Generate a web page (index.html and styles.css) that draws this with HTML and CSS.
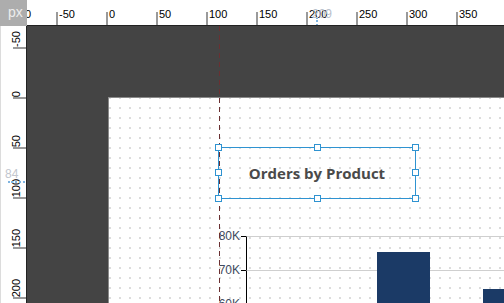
FILE: index.html
```html
<!DOCTYPE html>
<html lang="en">
<head>
  <meta charset="UTF-8">
  <title>Report Designer</title>
  <link rel="stylesheet" href="styles.css">
</head>
<body>

<div class="designer">
  <div class="corner">px</div>

  <div class="ruler-top">
    <div class="htick" style="left:-21px"><span>-100</span></div>
    <div class="htick" style="left:29px"><span>-50</span></div>
    <div class="htick" style="left:79px"><span>0</span></div>
    <div class="htick" style="left:129px"><span>50</span></div>
    <div class="htick" style="left:179px"><span>100</span></div>
    <div class="htick" style="left:229px"><span>150</span></div>
    <div class="htick" style="left:279px"><span>200</span></div>
    <div class="htick" style="left:329px"><span>250</span></div>
    <div class="htick" style="left:379px"><span>300</span></div>
    <div class="htick" style="left:429px"><span>350</span></div>
    <div class="cursor-x" style="left:289px"><span>209</span></div>
  </div>

  <div class="ruler-left">
    <div class="vtick" style="top:21px"><span>-50</span></div>
    <div class="vtick" style="top:71px"><span>0</span></div>
    <div class="vtick" style="top:121px"><span>50</span></div>
    <div class="vtick" style="top:171px"><span>100</span></div>
    <div class="vtick" style="top:221px"><span>150</span></div>
    <div class="vtick" style="top:271px"><span>200</span></div>
    <div class="cursor-y" style="top:155px"><span>84</span></div>
  </div>

  <div class="canvas">
    <div class="page">
      <!-- selected title element -->
      <div class="element selected title-box" style="left:109px; top:49px">
        <div class="title">Orders by Product</div>
        <i class="handle h-tl"></i><i class="handle h-tc"></i><i class="handle h-tr"></i>
        <i class="handle h-ml"></i><i class="handle h-mr"></i>
        <i class="handle h-bl"></i><i class="handle h-bc"></i><i class="handle h-br"></i>
      </div>

      <!-- column chart -->
      <div class="element chart" style="left:103px; top:138px">
        <div class="axis-row"><span class="tick-label">80K</span><span class="tick"></span><span class="grid"></span></div>
        <div class="axis-row"><span class="tick-label">70K</span><span class="tick"></span><span class="grid"></span></div>
        <div class="axis-row"><span class="tick-label">60K</span><span class="tick"></span><span class="grid"></span></div>
        <div class="bars">
          <div class="bar" style="left:131px; top:16px; width:53px"></div>
          <div class="bar" style="left:237px; top:53px; width:60px"></div>
        </div>
      </div>
    </div>
    <div class="guide" style="left:192px"></div>
  </div>
</div>

</body>
</html>
```

FILE: styles.css
```css
html, body {
  margin: 0;
  height: 100%;
  overflow: hidden;
}

body {
  font-family: 'Liberation Sans', Arial, sans-serif;
  background: #444;
}

.designer {
  display: grid;
  grid-template-columns: 27px 1fr;
  grid-template-rows: 26px 1fr;
  width: 504px;
  height: 303px;
}

.corner {
  background: #adadad;
  color: #ececec;
  font-size: 14px;
  line-height: 24px;
  padding-left: 8px;
  border-bottom: 1px solid #adadad;
  position: relative;
  z-index: 1;
}

/* rulers */
.ruler-top {
  position: relative;
  background: #fff;
  border-bottom: 1px solid #222;
  overflow: hidden;
}

.htick {
  position: absolute;
  top: 12px;
  width: 2px;
  height: 13px;
  background: #9a9a9a;
}

.htick span {
  position: absolute;
  left: 3px;
  top: -4px;
  font-size: 11px;
  line-height: 12px;
  color: #000;
}

.ruler-left {
  position: relative;
  background: #fff;
  border-left: 1px solid #dcdcdc;
  border-right: 1px solid #222;
  overflow: hidden;
}

.vtick {
  position: absolute;
  left: 12px;
  width: 13px;
  height: 2px;
  background: #9a9a9a;
}

.vtick span {
  position: absolute;
  left: -3px;
  bottom: 2px;
  writing-mode: vertical-rl;
  transform: rotate(180deg);
  font-size: 11px;
  line-height: 12px;
  color: #000;
}

.cursor-x {
  position: absolute;
  top: 17px;
  height: 9px;
  border-left: 2px dotted #7fb4e0;
}

.cursor-x span {
  position: absolute;
  left: -6px;
  top: -10px;
  font-size: 12px;
  color: #b9c1cc;
}

.cursor-y {
  position: absolute;
  left: 7px;
  width: 20px;
  border-top: 2px dotted #7fb4e0;
}

.cursor-y span {
  position: absolute;
  left: -3px;
  top: -16px;
  font-size: 12px;
  color: #c2c6ce;
}

/* design surface */
.canvas {
  position: relative;
  background: #444;
  overflow: hidden;
}

.page {
  position: relative;
  margin: 71px 0 0 81px;
  height: 400px;
  border-left: 1px solid #8a8a8a;
  border-top: 1px solid #8a8a8a;
  background-color: #dcdcdc;
  background-image:
    linear-gradient(to right, transparent 2px, #fff 2px),
    linear-gradient(to bottom, transparent 2px, #fff 2px);
  background-size: 10px 10px;
  background-position: 0 -1px;
}

.guide {
  position: absolute;
  top: 0;
  bottom: 0;
  width: 1px;
  z-index: 1;
  background: repeating-linear-gradient(to bottom, #6a3032 0 5px, transparent 5px 9px);
}

.element {
  position: absolute;
}

.title-box {
  width: 196px;
  height: 50px;
  border: 1px solid #2f93d1;
  display: flex;
  align-items: center;
  justify-content: center;
}

.title {
  font-family: 'Open Sans', sans-serif;
  font-weight: 700;
  font-size: 15px;
  color: #4a4a4a;
}

.handle {
  position: absolute;
  z-index: 2;
  width: 5px;
  height: 5px;
  background: #fff;
  border: 1px solid #2f93d1;
}

.h-tl { left: -4px; top: -4px; }
.h-tc { left: 95px; top: -4px; }
.h-tr { right: -4px; top: -4px; }
.h-ml { left: -4px; top: 21px; }
.h-mr { right: -4px; top: 21px; }
.h-bl { left: -4px; bottom: -4px; }
.h-bc { left: 95px; bottom: -4px; }
.h-br { right: -4px; bottom: -4px; }

/* chart */
.chart {
  width: 320px;
}

.axis-row {
  display: flex;
  height: 34px;
}

.tick-label {
  width: 28px;
  text-align: right;
  font-size: 12px;
  line-height: 14px;
  margin-top: -7px;
  color: #3e4a5e;
  padding-right: 1px;
}

.tick {
  width: 5px;
  height: 1px;
  background: #000;
}

.grid {
  flex: 1;
  border-top: 1px solid #cfcfcf;
  border-left: 1px solid #000;
}

.bars {
  position: absolute;
  left: 34px;
  top: 0;
  right: 0;
  bottom: 0;
}

.bar {
  position: absolute;
  bottom: 0;
  background: #1b3a66;
}
```
